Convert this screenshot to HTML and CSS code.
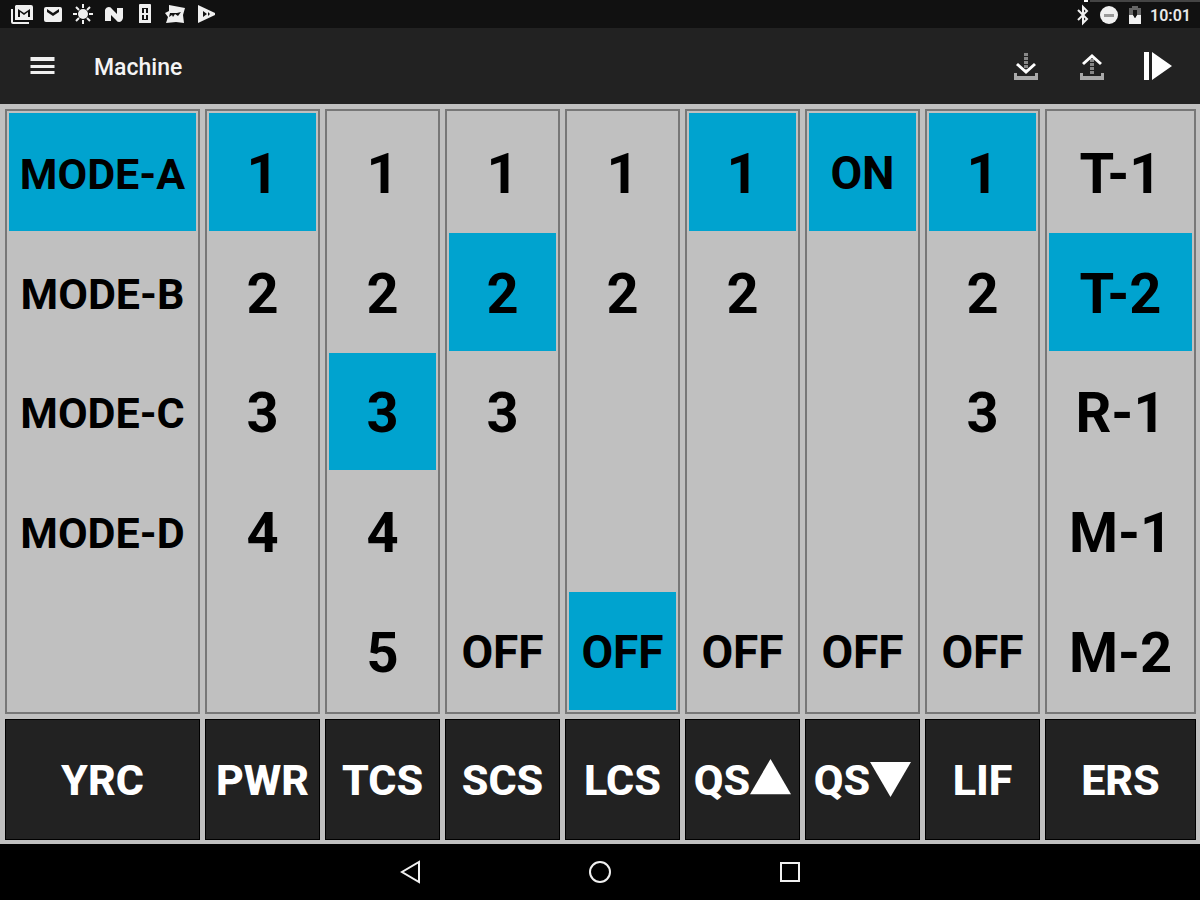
FILE: index.html
```html
<!DOCTYPE html>
<html lang="en">
<head>
    <meta charset="UTF-8">
    <meta name="viewport" content="width=device-width, initial-scale=1">
    <title>Machine</title>
    <link rel="stylesheet" href="styles.css">
</head>
<body>
    <div class="status-bar">
        <div class="notifications">
            <svg viewBox="0 0 22 22"><path d="M0 6h2v13h16v2H2a2 2 0 0 1-2-2z"/><path fill-rule="evenodd" d="M5 2h15a2 2 0 0 1 2 2v13H4V3zM7 6v8h2V9l4 3 4-3v5h2V6l-6 4z"/></svg>
            <svg viewBox="0 0 22 22"><path fill-rule="evenodd" d="M4 4h14a2 2 0 0 1 2 2v11a2 2 0 0 1-2 2H4a2 2 0 0 1-2-2V6a2 2 0 0 1 2-2zM5 6v3l6 4 6-4V6l-6 4z"/></svg>
            <svg viewBox="0 0 22 22"><circle cx="11" cy="11" r="5"/><path class="line" d="M11 1v4M11 17v4M1 11h4M17 11h4M4 4l3 3M15 15l3 3M4 18l3-3M15 7l3-3"/></svg>
            <svg viewBox="0 0 22 22"><path d="M2 18V7q1-3 4-3 2 0 3 2l5 5V5h6v10q-1 4-4 4-2 0-3-2l-5-5v6z"/></svg>
            <svg viewBox="0 0 22 22"><path fill-rule="evenodd" d="M6 1h10a1 1 0 0 1 1 1v18H5V2a1 1 0 0 1 1-1zM8 5v12h6V5z"/><path class="line" d="M11 6v10M8 11h6"/></svg>
            <svg viewBox="0 0 22 22"><path fill-rule="evenodd" d="M5 2l16 3-2 7 1 8-8-1-10 1 2-6-3-4 4-2zM6 10l-1 4 3-2 1 2 2-3 3 2 3-4-4 1z"/></svg>
            <svg viewBox="0 0 22 22"><path fill-rule="evenodd" d="M3 2l17 8v2L3 20zM8 8v6l4-3zM13 9v4l2-2z"/></svg>
        </div>
        <div class="system">
            <svg viewBox="0 0 22 22"><path class="line" d="M6 6l9 9-4 4V3l4 4-9 9"/></svg>
            <svg viewBox="0 0 22 22"><circle cx="11" cy="11" r="9"/><path class="minus" d="M6 10h10v3H6z"/></svg>
            <svg viewBox="0 0 22 22"><path class="dim" d="M5 4h3V2h6v2h3v8H5z"/><path d="M5 11h4l2 3 2-3h4v9H5z"/><path class="hole" d="M9 6h4v5l-2 3-2-3z"/></svg>
            <span>10:01</span>
        </div>
    </div>

    <header class="app-bar">
        <button class="icon-button menu" aria-label="Menu">
            <svg viewBox="0 0 24 24"><path d="M0 3h24v4H0zM0 11h24v3H0zM0 17h24v3H0z"/></svg>
        </button>
        <h1>Machine</h1>
        <div class="actions">
            <button class="icon-button" aria-label="Receive">
                <svg viewBox="0 0 28 30"><path class="dots" d="M14 2v18"/><path class="tray" d="M2 22h3v3h18v-3h3v7H2z"/><path class="line" d="M5 13l9 8 9-8"/></svg>
            </button>
            <button class="icon-button" aria-label="Send">
                <svg viewBox="0 0 28 30"><path class="dots" d="M14 8v16"/><path class="tray" d="M2 22h3v3h18v-3h3v7H2z"/><path class="line" d="M5 13l9-8 9 8"/></svg>
            </button>
            <button class="icon-button" aria-label="Start">
                <svg viewBox="0 0 28 30"><path d="M0 1h5v28H0zM8 1l20 14L8 29z"/></svg>
            </button>
        </div>
    </header>

    <main class="settings">
        <section class="channel">
            <div class="values mode">
                <button class="value selected">MODE-A</button>
                <button class="value">MODE-B</button>
                <button class="value">MODE-C</button>
                <button class="value">MODE-D</button>
            </div>
            <button class="name">YRC</button>
        </section>
        <section class="channel">
            <div class="values">
                <button class="value selected">1</button>
                <button class="value">2</button>
                <button class="value">3</button>
                <button class="value">4</button>
            </div>
            <button class="name">PWR</button>
        </section>
        <section class="channel">
            <div class="values">
                <button class="value">1</button>
                <button class="value">2</button>
                <button class="value selected">3</button>
                <button class="value">4</button>
                <button class="value">5</button>
            </div>
            <button class="name">TCS</button>
        </section>
        <section class="channel">
            <div class="values">
                <button class="value">1</button>
                <button class="value selected">2</button>
                <button class="value">3</button>
                <button class="value word last">OFF</button>
            </div>
            <button class="name">SCS</button>
        </section>
        <section class="channel">
            <div class="values">
                <button class="value">1</button>
                <button class="value">2</button>
                <button class="value word last selected">OFF</button>
            </div>
            <button class="name">LCS</button>
        </section>
        <section class="channel">
            <div class="values">
                <button class="value selected">1</button>
                <button class="value">2</button>
                <button class="value word last">OFF</button>
            </div>
            <button class="name">QS<svg viewBox="0 0 42 42" role="img" aria-label="up"><path d="M21 0l21 36H0z"/></svg></button>
        </section>
        <section class="channel">
            <div class="values">
                <button class="value word selected">ON</button>
                <button class="value word last">OFF</button>
            </div>
            <button class="name">QS<svg viewBox="0 0 42 42" role="img" aria-label="down"><path d="M0 3h42L21 39z"/></svg></button>
        </section>
        <section class="channel">
            <div class="values">
                <button class="value selected">1</button>
                <button class="value">2</button>
                <button class="value">3</button>
                <button class="value word last">OFF</button>
            </div>
            <button class="name">LIF</button>
        </section>
        <section class="channel">
            <div class="values">
                <button class="value">T-1</button>
                <button class="value selected">T-2</button>
                <button class="value">R-1</button>
                <button class="value">M-1</button>
                <button class="value">M-2</button>
            </div>
            <button class="name">ERS</button>
        </section>
    </main>

    <nav class="nav-bar">
        <button class="icon-button" aria-label="Back">
            <svg viewBox="0 0 24 24"><path class="line" d="M21 2v20L4 12z"/></svg>
        </button>
        <button class="icon-button" aria-label="Home">
            <svg viewBox="0 0 24 24"><circle class="line" cx="12" cy="12" r="10"/></svg>
        </button>
        <button class="icon-button" aria-label="Recent apps">
            <svg viewBox="0 0 24 24"><path class="line" d="M3 3h18v18H3z"/></svg>
        </button>
    </nav>
</body>
</html>
```

FILE: styles.css
```css
* {
    box-sizing: border-box;
}

body {
    margin: 0;
    min-height: 100vh;
    display: flex;
    flex-direction: column;
    background-color: #000000;
    color: #ffffff;
    font-family: Roboto, "Liberation Sans", sans-serif;
}

button {
    margin: 0;
    padding: 0;
    border: none;
    background: none;
    color: inherit;
    font: inherit;
    cursor: pointer;
}

svg {
    display: block;
    fill: #f0f0f0;
}

.line {
    fill: none;
    stroke: #f0f0f0;
    stroke-width: 2;
}

/* STATUS BAR */
.status-bar {
    height: 28px;
    padding: 0 9px 0 11px;
    display: flex;
    justify-content: space-between;
    align-items: center;
    /* thin strip over the system icons, white tick at its start */
    background-color: #111111;
    background-image: linear-gradient(#ffffff, #ffffff), linear-gradient(#444444, #444444);
    background-size: 4px 2px, 110px 2px;
    background-position: right 112px top, right top;
    background-repeat: no-repeat;
}

    .status-bar svg {
        width: 22px;
        height: 22px;
    }

    .status-bar .dim {
        fill: #666666;
    }

    .status-bar .hole {
        fill: #111111;
    }

    .status-bar .minus {
        fill: #999999;
    }

.notifications {
    width: 206px;
    display: flex;
    justify-content: space-between;
}

.system {
    padding-top: 2px;
    display: flex;
    align-items: center;
    gap: 4px;
    color: #e8e8e8;
    font-size: 16px;
    font-weight: 600;
}

/* APP BAR */
.app-bar {
    height: 76px;
    padding: 0 28px 0 30px;
    display: flex;
    align-items: center;
    background-color: #222222;
}

    .app-bar h1 {
        margin: 0 auto 0 39px;
        padding-top: 4px;
        color: #f5f5f5;
        font-size: 23px;
        font-weight: 500;
        line-height: 28px;
    }

.actions {
    display: flex;
    gap: 38px;
}

    .actions svg {
        width: 28px;
        height: 30px;
        fill: #ffffff;
    }

    .actions .line {
        fill: none;
        stroke: #ffffff;
        stroke-width: 3;
    }

    .actions .tray {
        fill: #aaaaaa;
    }

.menu svg {
    width: 25px;
    height: 24px;
}

.dots {
    fill: none;
    stroke: #888888;
    stroke-width: 4;
    stroke-dasharray: 3 1;
}

/* SETTINGS */
.settings {
    flex: 1;
    padding: 5px 4px 4px 5px;
    display: grid;
    grid-template-columns: 195fr repeat(7, 115fr) 151fr;
    gap: 5px;
    background-color: #c0c0c0;
}

.channel {
    min-width: 0;
    display: grid;
    grid-template-rows: 5fr 1fr;
    gap: 5px;
}

.values {
    padding: 2px;
    border: 2px solid #777777;
    display: grid;
    grid-template-columns: minmax(0, 1fr);
    grid-template-rows: repeat(5, 1fr);
    gap: 2px;
    color: #000000;
    font-size: 56px;
    font-weight: 700;
}

.value {
    padding-top: 4px;
}

.mode {
    font-size: 43px;
}

.word {
    padding-top: 2px;
    font-size: 46px;
}

.last {
    grid-row: 5;
}

.selected {
    background-color: #00a3cf;
}

.name {
    display: flex;
    justify-content: center;
    align-items: center;
    border: 1px solid #000000;
    background-color: #222222;
    font-size: 43px;
    font-weight: 800;
}

    .name svg {
        width: 41px;
        height: 41px;
        fill: #ffffff;
    }

/* NAVIGATION BAR */
.nav-bar {
    height: 56px;
    display: flex;
    justify-content: center;
    align-items: center;
    gap: 166px;
}

    .nav-bar svg {
        width: 24px;
        height: 24px;
    }
```
